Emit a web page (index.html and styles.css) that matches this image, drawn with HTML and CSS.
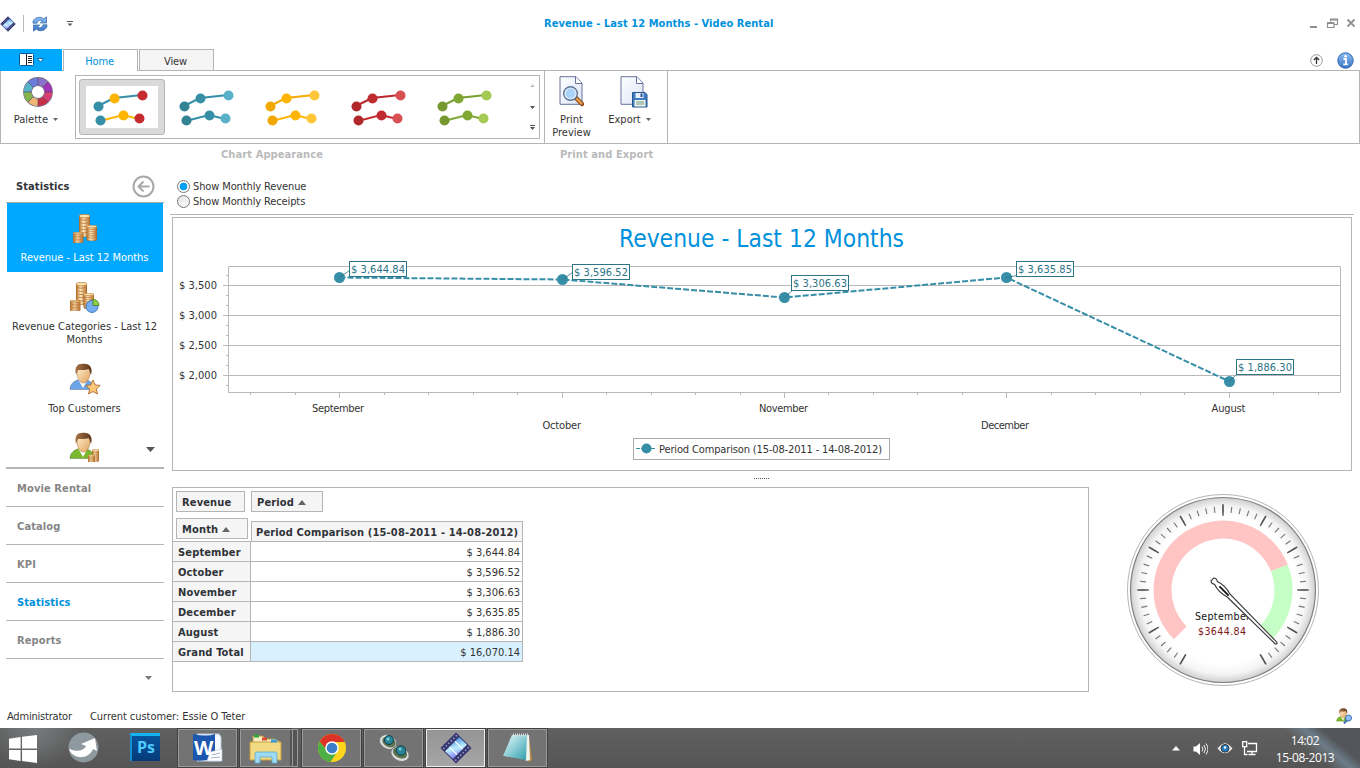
FILE: index.html
```
<!DOCTYPE html>
<html lang="en">
<head>
<meta charset="utf-8">
<title>Revenue - Last 12 Months - Video Rental</title>
<link rel="stylesheet" href="styles.css">
</head>
<body>
<svg class="defs" width="0" height="0" aria-hidden="true">
  <defs>
    <linearGradient id="gold" x1="0" x2="1" y1="0" y2="0"><stop offset="0" stop-color="#b06a24"/><stop offset=".4" stop-color="#ffe9bd"/><stop offset="1" stop-color="#b4682a"/></linearGradient>
    <linearGradient id="page" x1="0" y1="0" x2="1" y2="1"><stop offset="0" stop-color="#fff"/><stop offset="1" stop-color="#dbe3f5"/></linearGradient>
    <linearGradient id="film" x1="0" y1="0" x2="1" y2="1"><stop offset="0" stop-color="#4f8fe0"/><stop offset=".5" stop-color="#bff0ff"/><stop offset="1" stop-color="#7d7bf0"/></linearGradient>
    <linearGradient id="face" x1="0" x2="1" y1="0" y2="1"><stop offset="0" stop-color="#ffeccb"/><stop offset="1" stop-color="#e0a25c"/></linearGradient>
    <linearGradient id="hair" x1="0" x2="1"><stop offset="0" stop-color="#a87447"/><stop offset="1" stop-color="#5b3419"/></linearGradient>
    <linearGradient id="blue" x1="0" x2="0" y1="0" y2="1"><stop offset="0" stop-color="#8cc0f5"/><stop offset="1" stop-color="#3b74c4"/></linearGradient>
    <linearGradient id="glass" x1="0" x2="1" y1="0" y2="1"><stop offset="0" stop-color="#eafdff"/><stop offset="1" stop-color="#2f9dab"/></linearGradient>
    <symbol id="stack" viewBox="0 0 8 22" preserveAspectRatio="none"><path d="M0 2v18c0 2.600 8 2.600 8 0V2z" fill="url(#gold)" stroke="#a25c1c" stroke-width=".6"/><path d="M.2 5q3.800 2 7.600 0M.2 8q3.800 2 7.600 0M.2 11q3.800 2 7.600 0M.2 14q3.800 2 7.600 0M.2 17q3.800 2 7.600 0" fill="none" stroke="#bd7c38" stroke-width=".8"/><ellipse cx="4" cy="2" rx="4" ry="1.700" fill="#fbe3ae" stroke="#b97830" stroke-width=".6"/></symbol>
    <symbol id="coins" viewBox="0 0 32 32"><use href="#stack" x="10" y="1" width="11" height="23"/><use href="#stack" x="17.500" y="12" width="10.500" height="16"/><use href="#stack" x="4" y="19" width="10.500" height="11"/></symbol>
    <symbol id="person" viewBox="0 0 32 32"><path d="M1 26.500C1 20 6 18 9.500 16.500h7C21 18 25 20 25 26.500z" fill="currentColor" stroke="#00000055" stroke-width=".7"/><path d="M9 16l5 9 5-9z" fill="#fff"/><path d="M8 8c0 16 13 16 13 0V5H8z" fill="url(#face)" stroke="#a36a35" stroke-width=".5"/><path d="M7 12C5 3 9 .5 14 .7c7-.5 10 4 8 11.300C21 10 21 8 19.500 6 15 8 12 6.500 9 7z" fill="url(#hair)"/></symbol>
    <symbol id="filmstrip" viewBox="0 0 32 32"><g transform="rotate(45 16 16)"><rect x="5" y="5" width="22" height="22" fill="#35376d"/><path d="M10.500 6h11v20h-11z" fill="url(#film)"/><path d="M10.500 12h11M10.500 20h11" stroke="#fff" stroke-width="1"/><path d="M7.600 6.500v20M24.400 6.500v20" stroke="#9fa2cc" stroke-width="1.500" stroke-dasharray="1.500 2"/></g></symbol>
    <symbol id="thumb" viewBox="0 0 72 42"><path d="M12 20 28 12 56 9" fill="none" stroke="var(--line1)" stroke-width="2"/><path d="M14 35 37 29 53 33" fill="none" stroke="var(--line2)" stroke-width="2"/><circle cx="12.500" cy="20.500" r="5" fill="var(--a)"/><circle cx="14.500" cy="34.500" r="5" fill="var(--a)"/><circle cx="28.500" cy="12.500" r="5" fill="var(--b)"/><circle cx="37.500" cy="29.500" r="5" fill="var(--b)"/><circle cx="56.500" cy="9.500" r="5" fill="var(--c)"/><circle cx="53.500" cy="32.500" r="5" fill="var(--c)"/></symbol>
    <symbol id="sheet" viewBox="0 0 25 31"><path d="M1 .7h16l6 6.300v21.300H1z" fill="url(#page)" stroke="#68739b"/><path d="M16.500.7V7.500H23" fill="#fff" stroke="#68739b"/></symbol>
    <symbol id="down" viewBox="0 0 5 3"><path d="M0 0h5L2.500 3z" fill="currentColor"/></symbol>
  </defs>
</svg>

<div class="window">
  <header class="titlebar">
    <svg class="app-icon" width="16" height="16"><use href="#filmstrip" width="16" height="16"/></svg>
    <span class="quick-sep"></span>
    <svg class="refresh" width="16" height="16" viewBox="0 0 16 16"><path d="M1 7.200V5.500C2.500 1 9 0 11.700 3L14.500.8V7H8.300l2-2C8.200 3.600 5.800 4.200 5 7.200zM15 8.800v1.700c-1.500 4.500-8 5.500-10.700 2.500L1.500 15.200V9h6.200l-2 2c2.100 1.400 4.500.8 5.300-2.200z" fill="url(#blue)" stroke="#2d629e" stroke-width=".7"/></svg>
    <svg class="quick-more" width="6" height="5" viewBox="0 0 6 5"><path d="M0 0h6v1H0zM0.500 2.500h5L3 5z" fill="#555"/></svg>
    <h1 class="title">Revenue - Last 12 Months - Video Rental</h1>
    <svg class="controls" width="50" height="12" viewBox="0 0 50 12" fill="none" stroke="#909090"><path d="M2 9h7" stroke-width="2"/><path d="M22.500 3.500V1.500h7v5h-3M19.500 5h6.500v4.500h-6.500z" stroke-width="1.200"/><path d="M22 1.500h8M19 5h7" stroke-width="2"/><path d="M39.500 1.500l7 7M46.500 1.500l-7 7" stroke-width="1.800"/></svg>
  </header>

  <nav class="tabs">
    <button class="file-tab"><svg width="27" height="14" viewBox="0 0 27 14"><rect x="1.500" y=".5" width="14" height="12" rx="1" fill="#fff" stroke="#075a91"/><path d="M8.500 1v11M10 3.500h4M10 5.500h4M10 7.500h4M10 9.500h4" stroke="#222"/><path d="M19.500 5.500h6L22.500 9z" fill="#fff" stroke="#075a91" stroke-width=".8"/></svg></button>
    <a class="tab tab-active">Home</a>
    <a class="tab">View</a>
    <div class="tab-tools">
      <svg width="13" height="13" viewBox="0 0 13 13"><circle cx="6.500" cy="6.500" r="5.800" fill="#fff" stroke="#999"/><path d="M6.500 10V3.500M3.800 6l2.700-2.700L9.200 6" fill="none" stroke="#333" stroke-width="1.300"/></svg>
      <svg width="17" height="17" viewBox="0 0 17 17"><circle cx="8.500" cy="8.500" r="7.700" fill="url(#blue)" stroke="#2b64ad"/><path d="M6.500 7H9v5M6.300 12.300h4.600" stroke="#fff" stroke-width="1.800" fill="none"/><circle cx="8.500" cy="4.200" r="1.300" fill="#fff"/></svg>
    </div>
  </nav>

  <section class="ribbon">
    <button class="tool palette">
      <svg width="32" height="32" viewBox="0 0 32 32"><g fill="none" stroke-width="7.200" transform="translate(16 16)"><circle r="10.500" stroke="#7a7480" stroke-width="8.800"/><circle r="10.500" stroke="#8b70ce"/><circle r="10.500" stroke="#a334b8" pathLength="8" stroke-dasharray="1 7" stroke-dashoffset="1"/><circle r="10.500" stroke="#d93e73" pathLength="8" stroke-dasharray="1 7"/><circle r="10.500" stroke="#c93048" pathLength="8" stroke-dasharray="1 7" stroke-dashoffset="-1"/><circle r="10.500" stroke="#efb575" pathLength="8" stroke-dasharray="1 7" stroke-dashoffset="-2"/><circle r="10.500" stroke="#85b64a" pathLength="8" stroke-dasharray="1 7" stroke-dashoffset="-3"/><circle r="10.500" stroke="#57b4c9" pathLength="8" stroke-dasharray="1 7" stroke-dashoffset="-4"/><circle r="10.500" stroke="#6a7ddd" pathLength="8" stroke-dasharray="1 7" stroke-dashoffset="-5"/><path d="M0-14V-7M0 14V7M-14 0H-7M14 0H7M-10-10l5 5M10-10l-5 5M10 10l-5-5M-10 10l5-5" stroke="#444" stroke-width=".6"/></g></svg>
      <span class="w-palette">Palette <svg class="caret" width="5" height="3"><use href="#down" width="5" height="3"/></svg></span>
    </button>
    <div class="gallery">
      <div class="style-card selected mixed"><svg width="72" height="42"><use href="#thumb" width="72" height="42"/></svg></div>
      <div class="style-card teal"><svg width="72" height="42"><use href="#thumb" width="72" height="42"/></svg></div>
      <div class="style-card amber"><svg width="72" height="42"><use href="#thumb" width="72" height="42"/></svg></div>
      <div class="style-card red"><svg width="72" height="42"><use href="#thumb" width="72" height="42"/></svg></div>
      <div class="style-card green"><svg width="72" height="42"><use href="#thumb" width="72" height="42"/></svg></div>
      <div class="gallery-scroll"><svg width="5" height="46" viewBox="0 0 5 46"><path d="M.5 3h4l-2-3z" fill="#bbb"/><path d="M0 22h5l-2.500 3zM0 41h5v1H0zM0 43h5l-2.500 3z" fill="#555"/></svg></div>
    </div>
    <div class="export-group">
      <button class="tool print">
        <svg width="25" height="32" viewBox="0 0 25 32"><use href="#sheet" width="25" height="31"/><path d="M17 22l6 6" stroke="#8a4b1d" stroke-width="4.500" stroke-linecap="round"/><path d="M18 23l4.500 4.500" stroke="#ef9f4c" stroke-width="2.300" stroke-linecap="round"/><circle cx="11.500" cy="17.500" r="6.500" fill="#a9d3fa" stroke="#5d7596" stroke-width="2"/><circle cx="11.500" cy="17.500" r="5.500" fill="none" stroke="#eef6ff" stroke-width="1.200"/></svg>
        <span>Print<br>Preview</span>
      </button>
      <button class="tool export">
        <svg width="28" height="32" viewBox="0 0 28 32"><use href="#sheet" width="25" height="31"/><path d="M12.500 16.500H25l2 2V31H12.500z" fill="#3e7cc2" stroke="#24558f"/><path d="M15.500 17h8v5h-8z" fill="#e9eff8"/><path d="M20.500 17.500h2v3.500h-2z" fill="#24558f"/><path d="M14.500 24h11v6.500h-11z" fill="#f3f3e9"/><path d="M16 26h8M16 28h8" stroke="#698"/></svg>
        <span>Export <svg class="caret" width="5" height="3"><use href="#down" width="5" height="3"/></svg></span>
      </button>
    </div>
  </section>
  <div class="group-labels"><span class="lbl-appearance">Chart Appearance</span><span class="lbl-export">Print and Export</span></div>

  <main class="body">
    <aside class="sidebar">
      <div class="side-head"><b>Statistics</b><svg width="23" height="23" viewBox="0 0 23 23" fill="none" stroke="#a9a9a9" stroke-width="2"><circle cx="11.500" cy="11.500" r="10"/><path d="M17.500 11.500H7M11.500 6.500l-5 5 5 5"/></svg></div>
      <div class="side-list">
        <a class="side-item active"><svg width="32" height="32"><use href="#coins" width="32" height="32"/></svg><span>Revenue - Last 12 Months</span></a>
        <a class="side-item second"><svg width="32" height="32" viewBox="0 0 32 32"><use href="#coins" width="32" height="32" x="-3" y="0"/><circle cx="23" cy="25.500" r="6" fill="#74aef0" stroke="#2c66ad" stroke-width=".8"/><path d="M24 24.500v-6.200a6 6 0 0 1 6 6.200z" fill="#8ed03f" stroke="#3f7b1c" stroke-width=".8"/></svg><span>Revenue Categories - Last 12<br>Months</span></a>
        <a class="side-item third"><svg class="shirt-blue" width="32" height="32" viewBox="0 0 32 32"><use href="#person" width="32" height="32"/><path d="M24 17l2.200 5 5 .4-4 3.600 1.300 5-4.500-2.500-4.500 2.500 1.200-5-3.900-3.600 5-.4z" fill="#ffc778" stroke="#a86b30" stroke-width=".9"/></svg><span>Top Customers</span></a>
        <a class="side-item fourth"><svg class="shirt-green" width="32" height="30" viewBox="0 0 32 30"><use href="#person" width="32" height="32"/><use href="#stack" x="23" y="17" width="7" height="13"/><use href="#stack" x="19" y="23" width="7" height="9"/></svg></a>
        <svg class="side-more" width="9" height="5" viewBox="0 0 9 5"><path d="M0 0h9L4.500 5z" fill="currentColor"/></svg>
      </div>
      <ul class="side-nav">
        <li>Movie Rental</li><li>Catalog</li><li>KPI</li><li class="current">Statistics</li><li>Reports</li>
      </ul>
      <svg class="nav-more" width="7" height="4" viewBox="0 0 7 4"><path d="M0 0h7L3.500 4z" fill="#777"/></svg>
    </aside>

    <section class="content">
      <div class="options">
        <label class="option"><span class="radio checked"></span>Show Monthly Revenue</label>
        <label class="option"><span class="radio"></span>Show Monthly Receipts</label>
      </div>
      <div class="chart">
        <svg width="1178" height="252" viewBox="173 218 1178 252">
          <text class="chart-title" x="619" y="247" textLength="285" lengthAdjust="spacingAndGlyphs">Revenue - Last 12 Months</text>
          <g class="grid"><path d="M228.500 266.500H1340.500V392.500H228.500z"/><path d="M223 285.500H1340M223 315.500H1340M223 345.500H1340M223 375.500H1340M226 275.500h2M226 295.500h2M226 305.500h2M226 325.500h2M226 335.500h2M226 355.500h2M226 365.500h2M226 385.500h2"/><path d="M250.500 393v2M295.500 393v2M384.500 393v2M428.500 393v2M473.500 393v2M517.500 393v2M606.500 393v2M651.500 393v2M695.500 393v2M740.500 393v2M828.500 393v2M873.500 393v2M917.500 393v2M962.500 393v2M1051.500 393v2M1095.500 393v2M1140.500 393v2M1184.500 393v2M1273.500 393v2M1318.500 393v2M339.500 393v5M562.500 393v5M784.500 393v5M1006.500 393v5M1229.500 393v5"/></g>
          <g class="axis">
            <text x="179" y="289" textLength="38">$ 3,500</text><text x="179" y="319" textLength="38">$ 3,000</text><text x="179" y="349" textLength="38">$ 2,500</text><text x="179" y="379" textLength="38">$ 2,000</text>
            <text x="312" y="412" textLength="52">September</text><text x="542.500" y="429" textLength="38.500">October</text><text x="759" y="412" textLength="49">November</text><text x="981" y="429" textLength="48">December</text><text x="1211.500" y="412" textLength="34">August</text>
          </g>
          <path class="series" d="M339.500 277.500 562.500 279.500 784.500 297.500 1006.500 277.500 1229.500 381.500"/>
          <g class="points"><circle cx="339.500" cy="277.500" r="5.500"/><circle cx="562.500" cy="279.500" r="5.500"/><circle cx="784.500" cy="297.500" r="5.500"/><circle cx="1006.500" cy="277.500" r="5.500"/><circle cx="1229.500" cy="381.500" r="5.500"/></g>
          <g class="leaders"><path d="M339.500 277.500l10-7M562.500 279.500l10-7M784.500 297.500l8-7M1006.500 277.500l11-2M1229.500 381.500l8-8"/></g>
          <g class="tags"><rect x="349.500" y="261.500" width="57" height="15"/><rect x="572.500" y="264.500" width="57" height="15"/><rect x="791.500" y="275.500" width="57" height="15"/><rect x="1016.500" y="261.500" width="57" height="15"/><rect x="1236.500" y="359.500" width="57" height="15"/>
          <text x="351" y="273" textLength="54">$ 3,644.84</text><text x="574" y="276" textLength="54">$ 3,596.52</text><text x="793" y="287" textLength="54">$ 3,306.63</text><text x="1018" y="273" textLength="54">$ 3,635.85</text><text x="1238" y="371" textLength="54">$ 1,886.30</text></g>
          <rect x="633.500" y="438.500" width="256" height="21" fill="#fff" stroke="#aaa"/>
          <path d="M636 448.500h20" stroke="#368fa7" stroke-width="1.200" stroke-dasharray="4 1"/><circle cx="646.500" cy="448.500" r="5" fill="#368fa7"/>
          <g class="axis"><text x="659" y="453" textLength="223">Period Comparison (15-08-2011 - 14-08-2012)</text></g>
        </svg>
      </div>
      <div class="splitter"><i></i></div>
      <div class="lower">
        <div class="pivot">
          <div class="pivot-fields"><span class="field f-revenue">Revenue</span><span class="field f-period">Period <i class="asc"></i></span></div>
          <div class="pivot-head"><span class="field f-month">Month <i class="asc"></i></span><span class="field f-col">Period Comparison (15-08-2011 - 14-08-2012)</span></div>
          <table class="pivot-table">
            <tr><th>September</th><td>$ 3,644.84</td></tr>
            <tr><th>October</th><td>$ 3,596.52</td></tr>
            <tr><th>November</th><td>$ 3,306.63</td></tr>
            <tr><th>December</th><td>$ 3,635.85</td></tr>
            <tr><th>August</th><td>$ 1,886.30</td></tr>
            <tr class="total"><th>Grand Total</th><td>$ 16,070.14</td></tr>
          </table>
        </div>
        <div class="gauge">
          <svg width="196" height="196" viewBox="-98 -98 196 196">
            <defs><radialGradient id="dial"><stop offset=".8" stop-color="#fff"/><stop offset=".91" stop-color="#f4f4f4"/><stop offset="1" stop-color="#cfcfcf"/></radialGradient></defs>
            <circle r="95.500" fill="#fff" stroke="#b5b5b5"/><circle r="92.500" fill="url(#dial)" stroke="#808080" stroke-width="1.200"/>
            <g fill="none">
              <path d="M-40.200 69.700A80.500 80.500 0 1 1 40.200 69.700" stroke="#777" stroke-width="6" pathLength="300" stroke-dasharray=".8 5.200" stroke-dashoffset=".4"/>
              <path d="M-40 69.300A80 80 0 1 1 40 69.300" stroke="#555" stroke-width="11.500" pathLength="300" stroke-dasharray="1.100 28.900" stroke-dashoffset=".55"/>
              <path d="M37.100 64.300l5.800 10M-37.100 64.300l-5.800 10" stroke="#555" stroke-width="1.500"/>
              <path d="M-42.800 42.800A60.500 60.500 0 1 1 56.400-21.900" stroke="#ffc4c4" stroke-width="18"/>
              <path d="M56.400-21.900A60.500 60.500 0 0 1 42.800 42.800" stroke="#c5ffc5" stroke-width="18"/>
            </g>
            <text x="-28" y="30" textLength="55">September</text><text class="gauge-value" x="-25" y="45" textLength="48">$3644.84</text>
            <g transform="rotate(45)"><path d="M-15-2Q-13-4-10-2Q-2-5 8-2L75-1.200Q77 0 75 1.200L8 2Q-2 5-10 2Q-13 4-15 2z" fill="#fff" stroke="#333" stroke-width="1.100"/><path d="M-5 0H8" stroke="#111" stroke-width="1.800"/></g>
          </svg>
        </div>
      </div>
    </section>
  </main>

  <footer class="status"><span class="st-user">Administrator</span><span class="st-cust">Current customer: Essie O Teter</span><svg class="shirt-green st-icon" width="16" height="16" viewBox="0 0 32 32"><use href="#person" width="32" height="32"/><path d="M16 31l6-7" stroke="#3a6fb0" stroke-width="4"/><circle cx="25" cy="20" r="6" fill="#8fc0f5" stroke="#3a6fb0" stroke-width="2"/></svg></footer>
</div>

<footer class="taskbar">
  <svg class="start" width="29" height="28" viewBox="0 0 30 29" fill="#fff"><path d="M0 4l12-2v12H0zM13.500 1.800L29 0v14H13.500zM0 15.500h12V27L0 25zM13.500 15.500H29V29l-15.500-2z"/></svg>
  <svg class="pin-share" width="31" height="31" viewBox="0 0 31 31"><circle cx="15.500" cy="15.500" r="15" fill="#8d999f"/><path d="M1 16c3 4 14 4 17-2l-5-2 14-6 2 13-4-2C20 29 3 27 1 16z" fill="#fff"/></svg>
  <div class="ps">Ps</div>
  <div class="task-btns">
    <div class="task"><svg width="31" height="30" viewBox="0 0 31 30"><path d="M5 1h22l2 3v24H5z" fill="#f4f8ff" stroke="#bcd"/><path d="M1 1q14 3 22 0v24q-12 4-22 2z" fill="#1c56ae"/><path d="M18 19l12-3v12H15z" fill="#fff" stroke="#b9c7e0" stroke-width=".6"/><path d="M20 22l8-2M19 25l9-1" stroke="#9fb2d2"/><text class="word-w" x="2" y="22">W</text></svg></div>
    <div class="task task-stack"><svg width="34" height="31" viewBox="0 0 34 31"><path d="M4 3h10l2 3h10l5 3v15H4z" fill="#f8eec2" stroke="#b99a44"/><path d="M1 9h31v18H1z" fill="#f2d983" stroke="#c4a040"/><path d="M5 3h5" stroke="#2da83a" stroke-width="3"/><path d="M13 6h5" stroke="#dd4a32" stroke-width="3"/><path d="M22 8h6" stroke="#3a9de0" stroke-width="3"/><path d="M6 30V21q0-2 2-2h18q2 0 2 2v9h-5v-6H11v6z" fill="#9fdaf3" stroke="#5ba9ca" stroke-width=".8"/></svg></div>
    <div class="stack-edge"></div>
    <div class="task"><svg width="30" height="30" viewBox="-15 -15 30 30"><circle r="14" fill="#ffd51e"/><path d="M-12.400-6.500A14 14 0 0 1 12.700-6H0A6 6 0 0 0-6 1z" fill="#dd3226"/><path d="M-12.400-6.500A14 14 0 0 0-1.500 14L5 4-6 1z" fill="#4cae43"/><circle r="6.800" fill="#fff"/><circle r="5.300" fill="#3b7fca"/></svg></div>
    <div class="task"><svg width="32" height="30" viewBox="0 0 32 30"><g fill="#d8dcda" stroke="#777"><ellipse cx="10" cy="9" rx="9" ry="7" transform="rotate(25 10 9)"/><ellipse cx="22" cy="21" rx="9.500" ry="7" transform="rotate(25 22 21)"/></g><ellipse cx="11" cy="9" rx="7" ry="5" transform="rotate(25 11 9)" fill="#5e7250"/><ellipse cx="22" cy="20" rx="7.500" ry="5" transform="rotate(25 22 20)" fill="#5e7250"/><circle cx="11" cy="7" r="4.500" fill="#278496" stroke="#123f4a"/><circle cx="23" cy="17.500" r="4.800" fill="#278496" stroke="#123f4a"/><circle cx="10" cy="6" r="1.500" fill="#7fd1dc"/><circle cx="22" cy="16" r="1.500" fill="#7fd1dc"/></svg></div>
    <div class="task task-active"><svg width="32" height="32"><use href="#filmstrip" width="32" height="32"/></svg></div>
    <div class="task"><svg width="31" height="30" viewBox="0 0 31 30"><path d="M27 4l3 22-2 3-4-2z" fill="#b98b45"/><path d="M12 2h15l1 25-4 1z" fill="#f0f4ee"/><path d="M10 2h15l-1 25L1 23z" fill="url(#glass)"/><path d="M11 2h15" stroke="#ddd" stroke-width="3" stroke-dasharray="1 1"/></svg></div>
  </div>
  <div class="tray">
    <svg width="8" height="5" viewBox="0 0 8 5"><path d="M0 4.500h8L4 0z" fill="#fff"/></svg>
    <svg width="15" height="14" viewBox="0 0 15 14"><path d="M.5 4.500h2.500L7 1v12L3 9.500H.5z" fill="#fff"/><path d="M9 4.500q2 2.500 0 5M11 3q3 4 0 8M13 1.500q4 5.500 0 11" stroke="#eee" fill="none"/></svg>
    <svg width="16" height="13" viewBox="0 0 16 13"><path d="M1 6.500Q8-3 15 6.500 8 15 1 6.500z" fill="#ddd" stroke="#fff"/><circle cx="8" cy="6.300" r="3.900" fill="#257dbd" stroke="#333"/><circle cx="8" cy="5.500" r="1.200" fill="#fff"/></svg>
    <svg width="16" height="15" viewBox="0 0 16 15" fill="none" stroke="#fff" stroke-width="1.300"><path d="M6 2.500h8.500v8H5M10 10.500v3M6.500 13.500h7M2.500 5v8.500h3"/><rect x=".7" y=".7" width="4" height="5"/></svg>
  </div>
  <div class="clock"><span class="time">14:02</span><span class="date">15-08-2013</span></div>
</footer>
</body>
</html>
```
FILE: styles.css
```
* { box-sizing: border-box; }
html, body { margin: 0; width: 1360px; height: 768px; overflow: hidden; background: #fff; }
body { font: 11px/13px "DejaVu Sans Condensed", "DejaVu Sans", sans-serif; color: #333; letter-spacing: -0.12px; display: flex; flex-direction: column; }
svg { display: block; flex: none; }
.defs { position: absolute; }
button { font: inherit; letter-spacing: inherit; color: inherit; background: none; border: 0; padding: 0; margin: 0; }
.window { height: 728px; display: flex; flex-direction: column; }

.titlebar { height: 49px; display: flex; align-items: center; padding: 0 2px 2px 0; flex: none; }
.quick-sep { width: 1px; height: 17px; background: #b9b9b9; margin: 0 8px 0 7px; }
.quick-more { margin-left: 19px; }
.title { margin: 1px 0 0 470px; padding-left: 1px; width: 232px; font-size: 11px; line-height: 14px; font-weight: bold; letter-spacing: .06px; color: #0091dc; white-space: nowrap; }
.controls { margin-left: auto; }

.tabs { height: 22px; display: flex; flex: none; position: relative; z-index: 1; }
.file-tab { width: 62px; background: #00a8ff; display: flex; justify-content: center; padding-top: 4px; }
.tab { width: 75px; height: 21px; margin-left: 1px; border: 1px solid #b5b5b5; border-bottom: 0; text-align: center; padding: 5px 2px 0 0; background: #f5f5f5; }
.tab-active { height: 22px; background: #fff; color: #0091dc; }
.tab-tools { margin-left: auto; display: flex; align-items: center; gap: 14px; padding-right: 6px; }
.ribbon { height: 74px; margin-top: -1px; border: 1px solid #b5b5b5; display: flex; flex: none; }
.tool { display: flex; flex-direction: column; align-items: center; }
.caret { display: inline-block; vertical-align: 2px; margin-left: 2px; color: #666; }
.palette { width: 74px; padding-top: 5px; }
.palette span { margin-top: 5px; padding-right: 4px; white-space: nowrap; letter-spacing: 0; }
.gallery { width: 465px; height: 64px; margin-top: 4px; border: 1px solid #b5b5b5; display: flex; padding: 3px 0 0 3px; }
.style-card { width: 86px; height: 56px; padding: 7px; }
.selected { background: #dadada; border: 1px solid #b5b5b5; border-radius: 3px; padding: 6px; }
.selected svg { background: #fff; }
.mixed { --a: #368fa7; --b: #ffb400; --c: #c52b2f; --line1: #368fa7; --line2: #ffb400; }
.teal { --a: #338395; --b: #368fa7; --c: #58b1c8; --line1: #338fa5; --line2: #338fa5; }
.amber { --a: #f0a800; --b: #ffb400; --c: #ffc637; --line1: #f4aa00; --line2: #ffb400; }
.red { --a: #b0282c; --b: #c02b2f; --c: #d95054; --line1: #b9282c; --line2: #c52b2f; }
.green { --a: #759930; --b: #80a634; --c: #a3ca52; --line1: #789e30; --line2: #80a634; }
.gallery-scroll { padding: 5px 0 0 21px; }
.export-group { border-right: 1px solid #b5b5b5; border-left: 1px solid #b5b5b5; margin-left: 4px; display: flex; width: 124px; }
.print { width: 52px; padding: 5px 0 0 1px; }
.export { width: 64px; padding: 5px 0 0 3px; }
.export > svg { margin-left: 6px; }
.print span, .export span { margin-top: 5px; white-space: nowrap; letter-spacing: 0; }
.export span { padding-right: 2px; }
.group-labels { height: 26px; display: flex; padding-top: 4px; font-weight: bold; letter-spacing: .1px; color: #bababa; flex: none; }
.lbl-appearance { margin-left: 221px; width: 339px; }

.body { display: flex; height: 533px; flex: none; }
.sidebar { width: 164px; padding-left: 6px; display: flex; flex-direction: column; }
.side-head { height: 33px; display: flex; justify-content: space-between; align-items: center; padding: 1px 9px 0 10px; border-bottom: 1px solid #aaa; color: #2f3338; letter-spacing: .1px; }
.side-list { height: 266px; border-bottom: 2px solid #b5b5b5; position: relative; }
.side-item { display: flex; flex-direction: column; align-items: center; text-align: center; gap: 6px; letter-spacing: -.03px; }
.side-item span { margin-left: -1px; }
.active { height: 69px; margin: 0 1px; background: #00a8ff; color: #fff; padding-top: 10px; }
.second { padding-top: 9px; height: 82px; gap: 7px; }
.third { padding-top: 9px; height: 69px; gap: 7px; }
.fourth { padding-top: 9px; }
.side-more { position: absolute; left: 140px; bottom: 15px; color: #555; }
.side-nav { list-style: none; margin: 0; padding: 0; font-weight: bold; letter-spacing: .12px; color: #868686; }
.side-nav li { height: 38px; padding: 13px 11px 0; border-bottom: 1px solid #b5b5b5; }
.side-nav .current { color: #0091dc; }
.nav-more { margin: 17px 0 0 139px; }
.shirt-blue { color: #6ca4e8; }
.shirt-green { color: #7bb82d; }

.content { width: 1184px; margin-left: 6px; display: flex; flex-direction: column; }
.options { height: 45px; border-bottom: 1px solid #b5b5b5; padding: 9px 0 0 7px; flex: none; }
.option { display: flex; align-items: center; gap: 3px; height: 15px; }
.radio { width: 13px; height: 13px; border: 1px solid #777; border-radius: 50%; background: linear-gradient(135deg, #e2e2e2, #fff); }
.checked { background: radial-gradient(circle, #00a0f5 0 3.5px, #fff 4.2px); }
.chart { width: 1180px; height: 254px; margin: 2px 0 0 2px; border: 1px solid #b5b5b5; flex: none; }
.chart text { letter-spacing: 0; font-size: 11px; }
.chart .chart-title { font-size: 24px; fill: #0091dc; }
.grid { fill: none; stroke: #b9b9b9; }
.axis { fill: #333; }
.series { fill: none; stroke: #368fa7; stroke-width: 2; stroke-dasharray: 6 2; }
.points { fill: #368fa7; }
.leaders { stroke: #2c7486; stroke-width: .8; }
.tags rect { fill: #fff; stroke: #2c7486; }
.tags text { fill: #2c7486; }
.splitter { height: 16px; display: flex; justify-content: center; padding: 7px 2px 0 0; flex: none; }
.splitter i { width: 15px; height: 1px; background: repeating-linear-gradient(90deg, #555 0 1px, #fff 1px 2px); }
.lower { display: flex; height: 205px; margin-left: 2px; }
.pivot { width: 917px; height: 205px; border: 1px solid #b5b5b5; }
.pivot-fields { display: flex; gap: 6px; padding: 3px 0 0 3px; }
.field { height: 21px; border: 1px solid #b5b5b5; background: #f5f5f5; font-weight: bold; letter-spacing: .15px; padding: 4px 5px 0; color: #2f3338; white-space: nowrap; }
.f-revenue { width: 69px; }
.f-period { width: 72px; }
.f-month { width: 72px; margin-bottom: 2px; }
.pivot-head { display: flex; gap: 3px; padding: 6px 0 0 3px; align-items: flex-end; }
.f-col { width: 272px; height: 20px; padding: 4px 4px 0; border-bottom: 0; }
.asc { display: inline-block; border: 4px solid transparent; border-top: 0; border-bottom: 5px solid #666; margin-left: 0; vertical-align: 1px; }
.pivot-table { border-collapse: collapse; border-spacing: 0; table-layout: fixed; width: 351px; margin-left: -1px; }
.pivot-table th, .pivot-table td { height: 20px; padding: 1px 2px 0 5px; border: 1px solid #b5b5b5; text-align: right; letter-spacing: 0; }
.pivot-table th { width: 78px; text-align: left; background: #f5f5f5; color: #2f3338; letter-spacing: .15px; }
.pivot-table .total td { background: #d9f1ff; }
.gauge { margin-left: 36px; padding-top: 5px; }
.gauge text { font-size: 10.5px; letter-spacing: 0; fill: #111; }
.gauge .gauge-value { fill: #7b1717; }
.status { height: 25px; display: flex; align-items: center; padding: 1px 8px 0 7px; }
.st-user { width: 63px; letter-spacing: -.2px; }
.st-cust { margin-left: 20px; letter-spacing: -.05px; }
.st-icon { margin-left: auto; }

.taskbar { height: 40px; flex: none; display: flex; align-items: flex-start; background: radial-gradient(ellipse 45px 40px at 35px 0, #777b7d, transparent), linear-gradient(40deg, transparent 94.5%, #6c7c88 96%, #53565a 97.2%), linear-gradient(#606060, #555); }
.start { margin: 7px 0 0 9px; }
.pin-share { margin: 4px 0 0 30px; }
.ps { width: 30px; height: 28px; margin: 5px 0 0 31px; background: linear-gradient(#08539c, #053b79); border-top: 3px solid #11b5f2; border-left: 2px solid #168fd0; color: #4ccaff; font: bold 16px/22px "Open Sans", sans-serif; text-align: center; }
.task-btns { display: flex; margin: 1px 0 0 18px; gap: 4px; }
.task { width: 59px; height: 38px; display: flex; align-items: center; justify-content: center; border: 1px solid #9a9a9a; outline: 1px solid #414141; background: #737373; margin-right: -1px; }
.task-stack { width: 51px; }
.stack-edge { width: 8px; height: 38px; margin-left: -4px; border: 1px solid #9a9a9a; border-left: 0; background: linear-gradient(90deg, #555 0 2px, #9a9a9a 2px 3px, #555 3px); }
.task-active { background: linear-gradient(#949494, #a6a6a6); border-color: #eee; }
.word-w { font: bold 20px "Open Sans", sans-serif; fill: #fff; letter-spacing: -1px; }
.tray { margin-left: auto; display: flex; align-items: center; height: 41px; gap: 9px; }
.tray svg:first-child { margin-right: 4px; }
.clock { width: 64px; margin: 4px 23px 0 15px; color: #fff; display: flex; flex-direction: column; align-items: center; font: 12px/17px "Open Sans", sans-serif; letter-spacing: -.4px; }
```
